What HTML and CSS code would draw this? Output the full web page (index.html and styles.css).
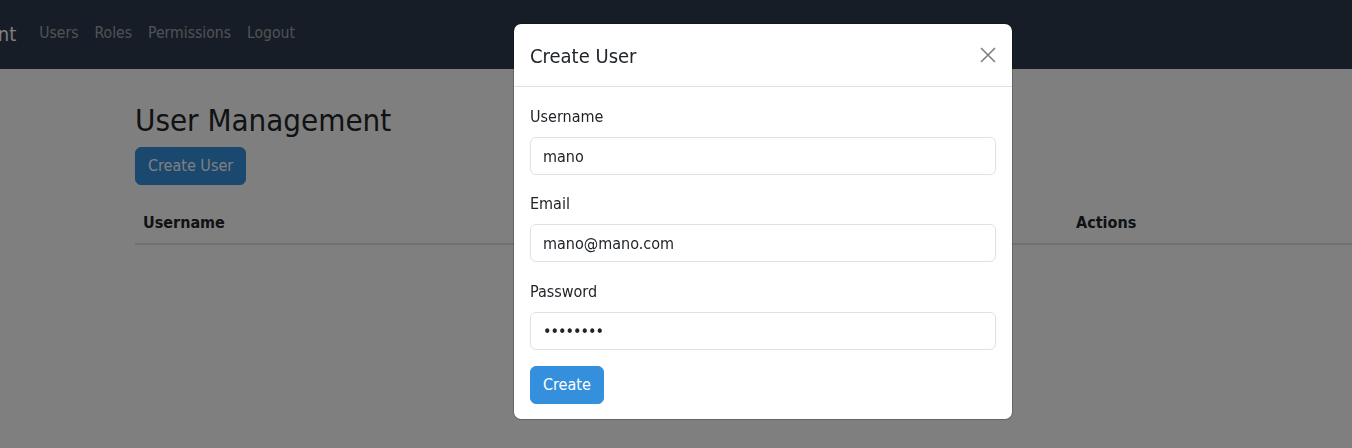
FILE: index.html
```html
<!DOCTYPE html>
<html lang="en">
<head>
<meta charset="utf-8">
<title>User Management</title>
<link rel="stylesheet" href="styles.css">
</head>
<body>
<nav class="navbar">
  <a class="brand" href="#">User Management</a>
  <ul class="nav-links">
    <li><a href="#">Users</a></li>
    <li><a href="#">Roles</a></li>
    <li><a href="#">Permissions</a></li>
    <li><a href="#">Logout</a></li>
  </ul>
</nav>
<main class="container">
  <h2 class="page-title">User Management</h2>
  <button class="btn btn-primary">Create User</button>
  <table class="table">
    <thead>
      <tr>
        <th class="col-user">Username</th>
        <th class="col-email">Email</th>
        <th class="col-roles">Roles</th>
        <th>Actions</th>
      </tr>
    </thead>
    <tbody></tbody>
  </table>
</main>

<div class="backdrop"></div>
<div class="modal">
  <div class="modal-header">
    <h5 class="modal-title">Create User</h5>
    <button class="btn-close" aria-label="Close">
      <svg viewBox="0 0 16 16" width="16" height="16"><path d="M1 1L15 15M15 1L1 15" stroke="currentColor" stroke-width="1.6" fill="none"/></svg>
    </button>
  </div>
  <div class="modal-body">
    <div class="form-group">
      <label for="u">Username</label>
      <input id="u" class="form-control" type="text" value="mano">
    </div>
    <div class="form-group">
      <label for="e">Email</label>
      <input id="e" class="form-control" type="email" value="mano@mano.com">
    </div>
    <div class="form-group last">
      <label for="p">Password</label>
      <input id="p" class="form-control password" type="password" value="12345678">
    </div>
    <button class="btn btn-primary">Create</button>
  </div>
</div>
</body>
</html>
```
FILE: styles.css
```css
* { box-sizing: border-box; }
html, body {
  margin: 0;
  height: 448px;
  overflow: hidden;
}
body {
  font-family: "DejaVu Sans Condensed", "DejaVu Sans", sans-serif;
  font-size: 16px;
  line-height: 1.5;
  color: #212529;
  background: #fff;
}
.navbar {
  height: 69px;
  padding-bottom: 1px;
  background: #2d3b4c;
  display: flex;
  align-items: center;
  white-space: nowrap;
}
.brand {
  font-size: 20px;
  color: #fff;
  text-decoration: none;
  margin-left: -149px;
  margin-right: 15px;
}
.nav-links {
  list-style: none;
  display: flex;
  margin: 0;
  padding: 0;
}
.nav-links a {
  display: block;
  padding: 8px;
  font-size: 15.6px;
  color: rgba(255,255,255,.55);
  text-decoration: none;
}
.container {
  padding: 32px 0 0 135px;
}
.page-title {
  font-size: 31px;
  font-weight: normal;
  line-height: 1.24;
  margin: 0 0 8px;
}
.btn {
  font-family: inherit;
  font-size: 16px;
  line-height: 24px;
  padding: 6px 12px;
  border: 1px solid transparent;
  border-radius: 6px;
  cursor: pointer;
}
.btn-primary {
  background: #3490dc;
  border-color: #3490dc;
  color: #fff;
}
.table {
  margin-top: 18px;
  width: 1300px;
  border-collapse: collapse;
  table-layout: fixed;
}
.table th {
  text-align: left;
  padding: 8px;
  border-bottom: 2px solid #dee2e6;
  font-weight: bold;
}
.table th.col-user { width: 420px; }
.table th.col-email { width: 300px; }
.table th.col-roles { width: 213px; }

.backdrop {
  position: fixed;
  inset: 0;
  background: rgba(0,0,0,.5);
}
.modal {
  position: fixed;
  top: 23px;
  left: 513px;
  width: 500px;
  background: #fff;
  border: 1px solid rgba(0,0,0,.2);
  border-radius: 8px;
  background-clip: padding-box;
}
.modal-header {
  display: flex;
  align-items: center;
  justify-content: space-between;
  padding: 17px 16px 15px;
  border-bottom: 1px solid #dee2e6;
}
.modal-title {
  margin: 0;
  font-size: 20px;
  font-weight: normal;
  line-height: 1.5;
}
.btn-close {
  width: 24px;
  height: 24px;
  padding: 4px;
  margin-right: -4px;
  margin-top: -2px;
  border: 0;
  background: transparent;
  color: #000;
  opacity: .5;
  display: flex;
  cursor: pointer;
}
.modal-body {
  padding: 18px 16px 15px;
}
.form-group {
  margin-bottom: 17px;
}
.form-group.last {
  margin-bottom: 16px;
  padding-top: 1px;
}
.form-group label {
  display: block;
  margin-bottom: 8px;
}
.form-control {
  display: block;
  width: 100%;
  height: 38px;
  padding: 6px 12px;
  font-family: inherit;
  font-size: 16px;
  color: #212529;
  border: 1px solid #dee2e6;
  border-radius: 6px;
  background: #fff;
}
.form-control.password {
  letter-spacing: -1px;
}
```
